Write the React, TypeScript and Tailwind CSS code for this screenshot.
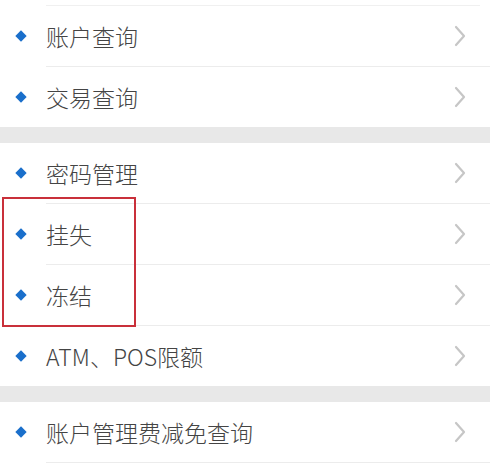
import React from 'react';

interface Item {
  label: string;
  divider: boolean;
}

// groups are separated by a grey band
const groups: Item[][] = [
  [
    { label: '账户查询', divider: true },
    { label: '交易查询', divider: false },
  ],
  [
    { label: '密码管理', divider: true },
    { label: '挂失', divider: true },
    { label: '冻结', divider: true },
    { label: 'ATM、POS限额', divider: false },
  ],
  [{ label: '账户管理费减免查询', divider: true }],
];

const Chevron = () => (
  <svg width="12" height="22" viewBox="0 0 12 22" fill="none">
    <path d="M2 2l8 9-8 9" stroke="#c6c6c6" strokeWidth="2.2" strokeLinecap="round" strokeLinejoin="round" />
  </svg>
);

const Row: React.FC<{ item: Item }> = ({ item }) => (
  <div className="flex flex-col">
    <div className="h-[60px] flex items-center pl-[17px] pr-[24px]">
      <span className="w-[8px] h-[8px] rotate-45 bg-[#1a6fcb] shrink-0" />
      <span className="ml-[21px] flex-1 text-[23px] leading-none font-light text-[#444444]">{item.label}</span>
      <Chevron />
    </div>
    {item.divider && <div className="h-px ml-[46px] bg-[#ececec]" />}
  </div>
);

export default function App() {
  return (
    <div
      className="relative w-[499px] h-[472px] overflow-hidden bg-white"
      style={{ fontFamily: '"Noto Sans CJK SC", "Noto Sans", sans-serif' }}
    >
      <div className="w-[490px] flex flex-col">
        <div className="h-[5px]" />
        <div className="h-px ml-[46px] mr-[10px] bg-[#f0f0f0]" />
        {groups.map((group, gi) => (
          <div key={gi} className="flex flex-col">
            {gi > 0 && <div className="h-[16px] bg-[#e8e8e8]" />}
            {group.map((item) => (
              <Row key={item.label} item={item} />
            ))}
          </div>
        ))}
      </div>

      {/* highlight box drawn over the list */}
      <div className="absolute left-[2px] top-[197px] w-[134px] h-[130px] border-2 border-[#c9303a]" />
    </div>
  );
}
